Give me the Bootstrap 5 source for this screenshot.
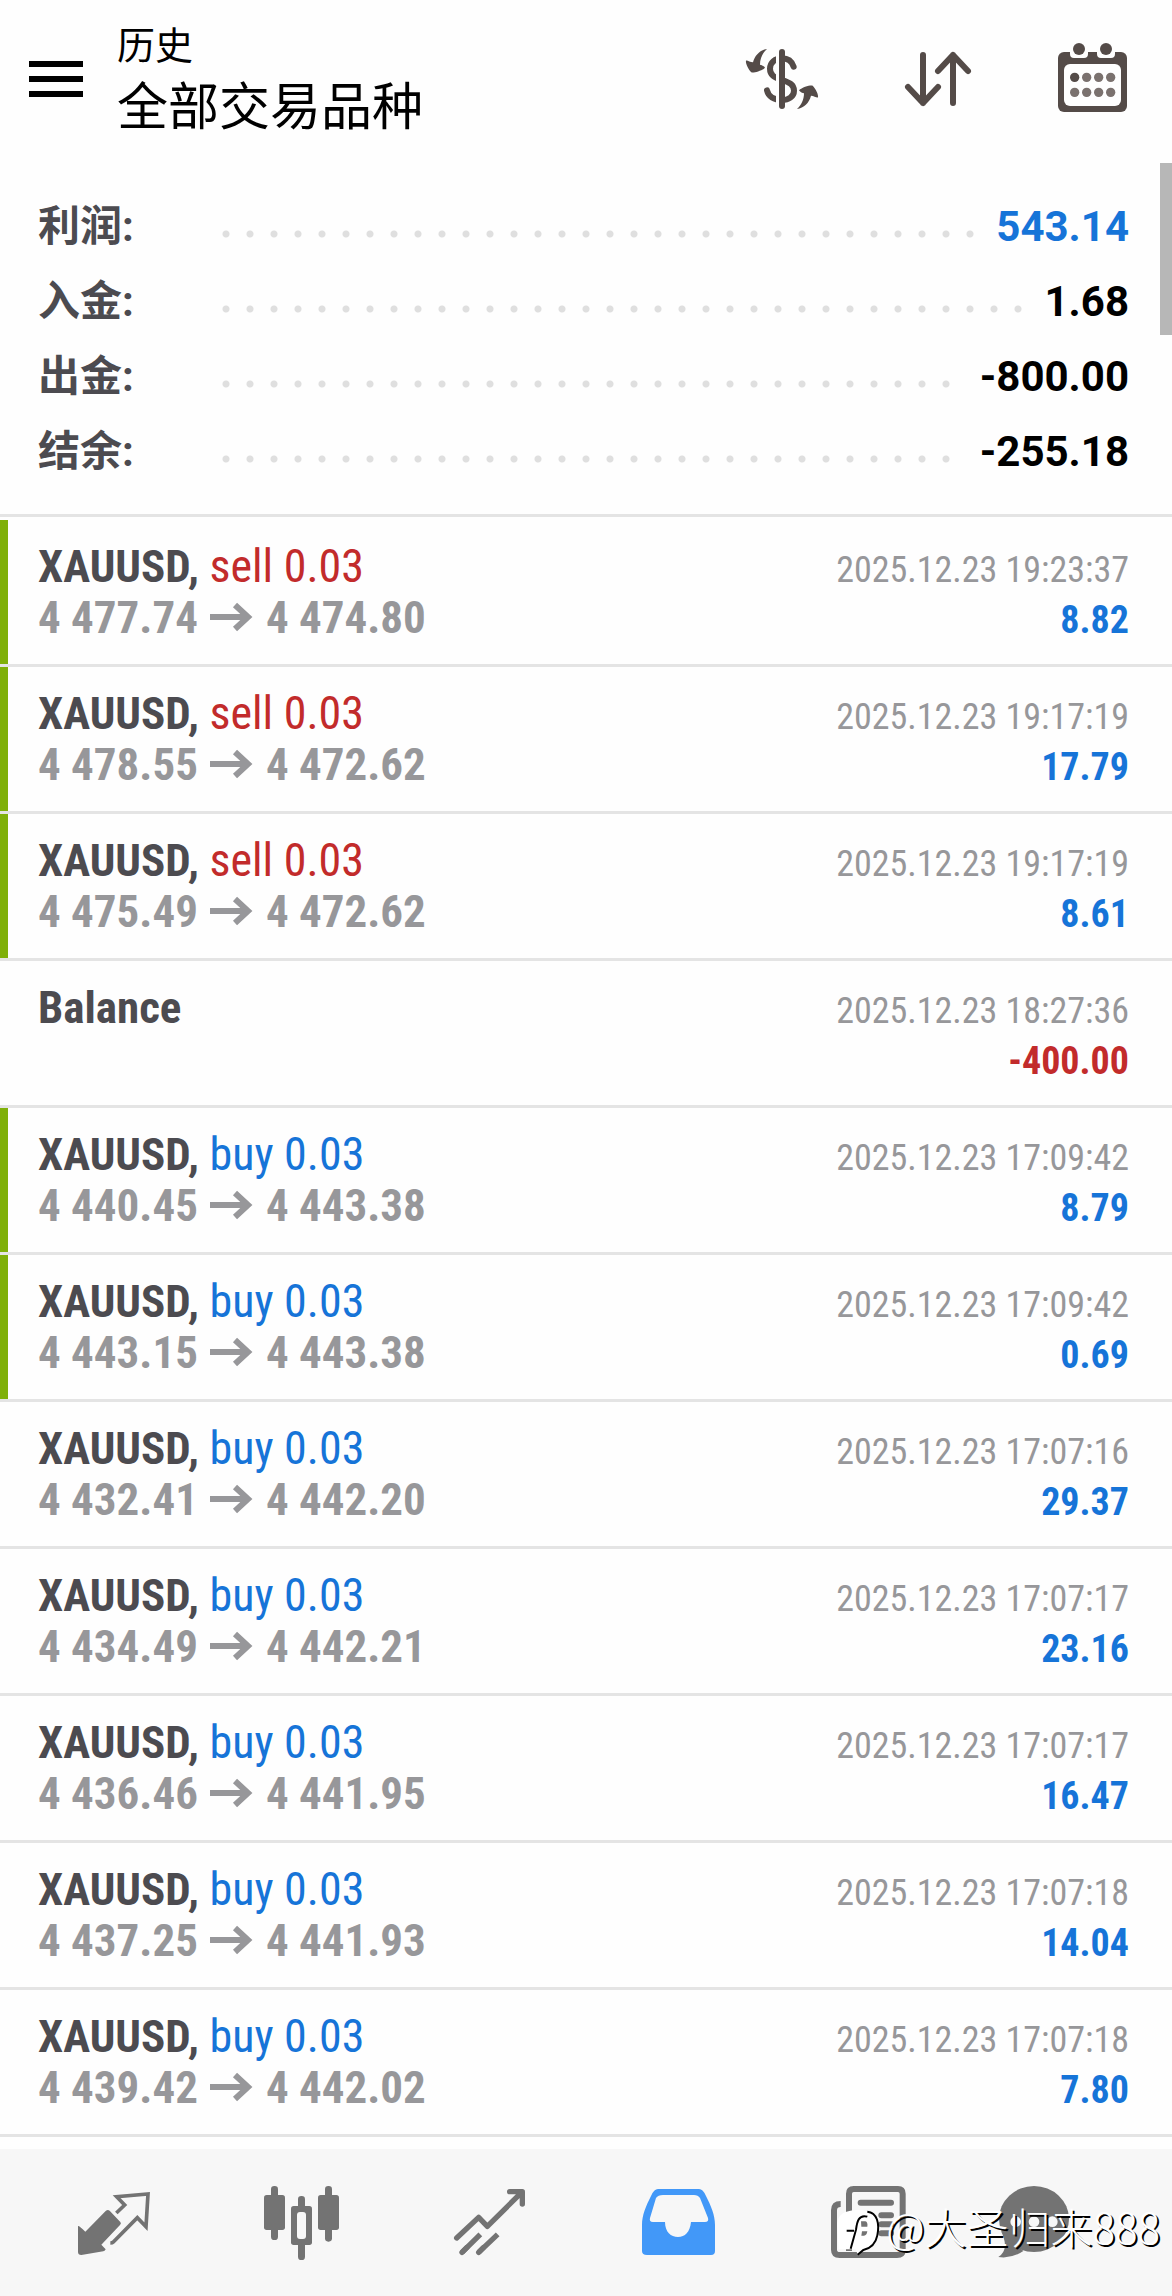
<!DOCTYPE html>
<html lang="zh-CN">
<head>
<meta charset="utf-8">
<meta name="viewport" content="width=device-width, initial-scale=1">
<title>历史</title>
<link href="https://cdn.jsdelivr.net/npm/bootstrap@5.3.0/dist/css/bootstrap.min.css" rel="stylesheet">
<style>
  :root { --ink: #4c4b50; --muted: #97979a; --blue: #1674d8; --red: #c22b2b; --green: #7fb009; --rule: #e4e4e4; }
  body { font-family: Roboto, "Noto Sans CJK SC", sans-serif; background: #fefefe; color: #000; }
  svg { display: block; }
  .topbar { height: 158px; padding: 0 38px 0 29px; }
  .topbar .btn, .tabbar a { line-height: 1; }
  .titles { font-family: "Noto Sans CJK SC", sans-serif; margin-left: 34px; }
  .title-sub { font-size: 38px; line-height: 48px; }
  .title-main { font-size: 51px; line-height: 72px; }
  .tools { gap: 76px; color: #544b48; }
  .totals { padding: 31px 43px 25px 38px; border-bottom: 3px solid var(--rule); font-size: 42px; line-height: 75px; font-weight: 700; }
  .totals dt { width: 184px; color: var(--ink); }
  .leader { height: 8px; margin: 14px 20px 0 0; background: radial-gradient(circle at 4px 4px, #dfdfdf 3px, transparent 4px) 0 0 / 24px 8px repeat-x; }
  .deals { padding-top: 3px; font-family: "Roboto Condensed", Roboto, sans-serif; }
  .deal { padding: 21px 43px 21px 38px; border-bottom: 3px solid var(--rule); line-height: 51px; }
  .deal > div { height: 51px; }
  .deal.closed { box-shadow: inset 8px 0 0 var(--green); }
  .symbol, .prices { font-size: 45px; font-weight: 700; }
  .symbol { color: var(--ink); }
  .side { font-size: 46px; font-weight: 400; }
  .prices, .stamp { color: var(--muted); }
  .prices svg { display: inline-block; margin: 0 13px 0 12px; vertical-align: 1px; }
  .stamp { font-size: 36px; }
  .amount { font-size: 38px; font-weight: 700; }
  .up { color: var(--blue); }
  .down { color: var(--red); }
  .tabbar { height: 147px; padding: 0 24px 0 20px; background: #f7f7f7; color: #737373; }
  .tabbar .active { color: #4298f8; }
  .slot { width: 188px; }
  .scroll-thumb { top: 163px; right: 0; width: 12px; height: 172px; background: #b7b7b7; }
  .author { right: 12px; bottom: 38px; font-family: "Noto Sans CJK SC", sans-serif; font-size: 42px; font-weight: 300; line-height: 56px; color: #fff; text-shadow: 2px 2px 0 #000; }
  .author svg { margin-top: 14px; }
</style>
<script src="https://cdn.jsdelivr.net/npm/bootstrap@5.3.0/dist/js/bootstrap.bundle.min.js"></script>
</head>
<body>
<div class="position-relative d-flex flex-column min-vh-100">
  <header class="topbar d-flex align-items-center">
    <button class="btn p-0 border-0" aria-label="菜单">
      <svg width="54" height="36" viewBox="0 0 54 36"><path d="M0 0h54v6H0zM0 15h54v6H0zM0 30h54v6H0z"/></svg>
    </button>
    <div class="titles me-auto">
      <div class="title-sub">历史</div>
      <h1 class="title-main fw-normal m-0">全部交易品种</h1>
    </div>
    <div class="tools d-flex">
      <button class="btn p-0 border-0" aria-label="货币">
        <svg width="80" height="80" viewBox="126 117 240 240" fill="#544b48">
          <path d="M281 200C275 183 262 175 246 175C225 175 210 188 210 206C210 225 222 232 246 240C268 247 282 254 282 272C282 290 265 300 246 300C222 300 205 289 201 271" fill="none" stroke="#544b48" stroke-width="18" stroke-linecap="round"/>
          <path d="M228 150h12v170h-12z" fill="#fefefe"/>
          <rect x="237" y="147" width="18" height="180" rx="9"/>
          <path id="swap" d="M201 147C180 150 165 165 159 187C150 187 141 179 138 182C136 190 145 208 154 217C158 220 185 214 195 203C191 197 184 195 180 194C180 175 188 158 201 147Z"/>
          <use href="#swap" transform="rotate(180 246 237)"/>
        </svg>
      </button>
      <button class="btn p-0 border-0" aria-label="排序">
        <svg width="80" height="80" viewBox="594 117 240 240" fill="none" stroke="#544b48" stroke-width="18" stroke-linecap="round" stroke-linejoin="round"><path d="M669 165V309M624 261L669 309L714 261M759 309V165M714 213L759 165L804 213"/></svg>
      </button>
      <button class="btn p-0 border-0" aria-label="日期">
        <svg width="80" height="80" viewBox="1062 117 240 240" fill="#544b48">
          <rect x="1074" y="156" width="207" height="180" rx="18"/>
          <path d="M1110 150H1164V162Q1164 174 1152 174H1122Q1110 174 1110 162ZM1191 150H1245V162Q1245 174 1233 174H1203Q1191 174 1191 162Z" fill="#fefefe"/>
          <circle cx="1137" cy="147" r="18"/><circle cx="1218" cy="147" r="18"/>
          <rect x="1092" y="192" width="171" height="126" rx="18" fill="#fefefe"/>
          <circle cx="1124" cy="232" r="14"/>
          <g fill="#7a716e"><circle cx="1160" cy="232" r="14"/><circle cx="1196" cy="232" r="14"/><circle cx="1232" cy="232" r="14"/><circle cx="1124" cy="277" r="14"/><circle cx="1160" cy="277" r="14"/><circle cx="1196" cy="277" r="14"/><circle cx="1232" cy="277" r="14"/></g>
        </svg>
      </button>
    </div>
  </header>

  <main>
    <dl class="totals m-0">
      <div class="d-flex align-items-center"><dt>利润:</dt><span class="leader flex-grow-1"></span><dd class="m-0 up">543.14</dd></div>
      <div class="d-flex align-items-center"><dt>入金:</dt><span class="leader flex-grow-1"></span><dd class="m-0">1.68</dd></div>
      <div class="d-flex align-items-center"><dt>出金:</dt><span class="leader flex-grow-1"></span><dd class="m-0">-800.00</dd></div>
      <div class="d-flex align-items-center"><dt>结余:</dt><span class="leader flex-grow-1"></span><dd class="m-0">-255.18</dd></div>
    </dl>
    <ul class="deals list-unstyled m-0" id="deals"></ul>
  </main>

  <nav class="tabbar d-flex align-items-center mt-auto">
    <a href="#" class="slot flex-fill d-flex justify-content-center text-reset" aria-label="行情">
      <svg width="80" height="80" viewBox="42 36 240 240" fill="currentColor"><path d="M54 165Q58 164 76 182L137 120Q143 115 149 119L181 153Q185 157 180 162L124 221L137 235Q136 240 130 241L64 252Q54 252 54 243Z"/><path d="M169 126L194 102L170 77L264 69L258 167L232 140L160 213Q157 216 151 216" fill="none" stroke="currentColor" stroke-width="11"/></svg>
    </a>
    <a href="#" class="slot flex-fill d-flex justify-content-center text-reset" aria-label="图表">
      <svg width="80" height="80" viewBox="606 36 240 240" fill="currentColor"><rect x="612" y="72" width="63" height="105" rx="8"/><rect x="633" y="45" width="21" height="162" rx="10"/><rect x="774" y="72" width="63" height="105" rx="8"/><rect x="795" y="45" width="21" height="167" rx="10"/><rect x="714" y="75" width="21" height="50" rx="10"/><rect x="714" y="205" width="21" height="62" rx="10"/><rect x="693" y="105" width="63" height="117" rx="8"/><rect x="711" y="123" width="27" height="81" rx="9" fill="#f7f7f7"/></svg>
    </a>
    <a href="#" class="slot flex-fill d-flex justify-content-center text-reset" aria-label="交易">
      <svg width="80" height="80" viewBox="1170 36 240 240" fill="none" stroke="currentColor" stroke-width="16" stroke-linejoin="round"><path d="M1190 201L1256 139L1282 166L1385 64M1349 62H1387V99M1206 244L1220 230M1256 244L1270 230" stroke-linecap="round"/><path d="M1206 244L1261 190M1256 244L1313 190"/></svg>
    </a>
    <a href="#" class="slot active flex-fill d-flex justify-content-center" aria-current="page" aria-label="历史">
      <svg width="80" height="80" viewBox="0 0 80 80" fill="currentColor"><path fill-rule="evenodd" d="M20 6H61Q65 6 68 13C73 23 77 32 77 42V68Q77 72 73 72H9Q4 72 4 68V42C4 32 8 23 13 13Q16 6 20 6ZM25 12Q20 12 18 15L12 35Q11 39 15 39H27C27 49 33 54 40 54C47 54 52 49 53 39H67Q71 39 70 35L62 15Q60 12 56 12Z"/></svg>
    </a>
    <a href="#" class="slot flex-fill d-flex justify-content-center text-reset" aria-label="新闻">
      <svg width="80" height="80" viewBox="33 36 240 240" fill="none" stroke="currentColor" stroke-width="18"><path d="M77 99Q57 99 57 118V236Q57 252 74 252H246Q263 252 263 238V68Q263 54 249 54H116Q102 54 102 68V240"/><path d="M137 95H228M199 133H228M199 160H228M199 187H228M137 133H163V187H137Z" stroke-linecap="round"/></svg>
    </a>
    <a href="#" class="slot flex-fill d-flex justify-content-center text-reset" aria-label="聊天">
      <svg width="120" height="80" viewBox="537 36 360 240" fill="currentColor"><ellipse cx="657" cy="144" rx="105" ry="99"/><path d="M558 180Q585 235 550 258Q590 264 625 240Z"/><g fill="#f7f7f7"><circle cx="602" cy="152" r="16"/><circle cx="657" cy="152" r="16"/><circle cx="712" cy="152" r="16"/></g></svg>
    </a>
  </nav>

  <div class="scroll-thumb position-absolute"></div>
  <div class="author position-absolute d-flex align-items-center">
    <svg width="50" height="50" viewBox="58 118 150 150"><path d="M62 175C60 135 85 125 125 124C175 122 188 150 185 190C182 225 165 238 140 243L124 258L116 242L66 242Z" fill="#fff"/><path d="M152 129C182 132 189 165 182 200C176 230 158 240 140 244L123 258M152 144C126 136 121 160 118 183L102 240M90 186H112" fill="none" stroke="#000" stroke-width="6"/><path d="M133 158H146Q154 160 152 174H134ZM136 188H152Q150 201 142 201H134Z" fill="#737373"/></svg>
    <span>@大圣归来888</span>
  </div>
</div>
<script>
  const deals = [
    ['sell', '4 477.74', '4 474.80', '19:23:37', '8.82', 1],
    ['sell', '4 478.55', '4 472.62', '19:17:19', '17.79', 1],
    ['sell', '4 475.49', '4 472.62', '19:17:19', '8.61', 1],
    ['', '', '', '18:27:36', '-400.00', 0],
    ['buy', '4 440.45', '4 443.38', '17:09:42', '8.79', 1],
    ['buy', '4 443.15', '4 443.38', '17:09:42', '0.69', 1],
    ['buy', '4 432.41', '4 442.20', '17:07:16', '29.37', 0],
    ['buy', '4 434.49', '4 442.21', '17:07:17', '23.16', 0],
    ['buy', '4 436.46', '4 441.95', '17:07:17', '16.47', 0],
    ['buy', '4 437.25', '4 441.93', '17:07:18', '14.04', 0],
    ['buy', '4 439.42', '4 442.02', '17:07:18', '7.80', 0]
  ];
  const arrow = '<svg width="43" height="30" viewBox="0 0 43 30" fill="none" stroke="#97979a" stroke-width="6"><path d="M0 15H38M25 3L38 15L25 27"/></svg>';
  document.getElementById('deals').innerHTML = deals.map(([side, from, to, time, sum, closed]) => `
    <li class="deal${closed ? ' closed' : ''}">
      <div class="d-flex justify-content-between align-items-baseline">
        <span class="symbol">${side ? `XAUUSD, <span class="side ${side === 'buy' ? 'up' : 'down'}">${side} 0.03</span>` : 'Balance'}</span>
        <time class="stamp">2025.12.23 ${time}</time>
      </div>
      <div class="d-flex justify-content-between align-items-baseline">
        <span class="prices">${side ? from + arrow + to : '&nbsp;'}</span>
        <span class="amount ${sum[0] === '-' ? 'down' : 'up'}">${sum}</span>
      </div>
    </li>`).join('');
</script>
</body>
</html>
